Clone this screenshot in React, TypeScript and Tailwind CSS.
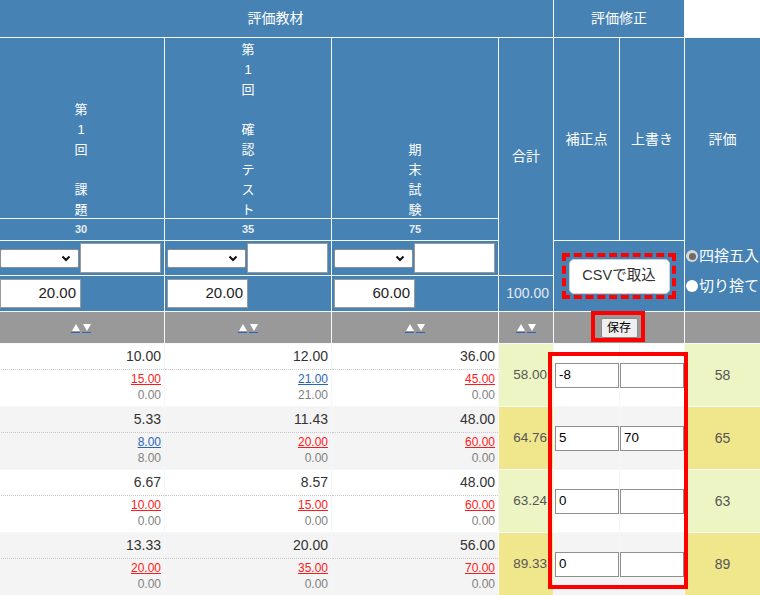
import React from "react";

type Cell = { v: string; l: string; red: boolean; z: string };
type Row = {
  bg: string;
  totBg: string;
  tot: string;
  cells: Cell[];
  p: string;
  o: string;
  g: string;
  rs: string;
};

const rows: Row[] = [
  {
    bg: "bg-white",
    totBg: "bg-[#eef5c4]",
    tot: "58.00",
    cells: [
      { v: "10.00", l: "15.00", red: true, z: "0.00" },
      { v: "12.00", l: "21.00", red: false, z: "21.00" },
      { v: "36.00", l: "45.00", red: true, z: "0.00" },
    ],
    p: "-8",
    o: "",
    g: "58",
    rs: "row-start-7",
  },
  {
    bg: "bg-[#f4f4f4]",
    totBg: "bg-[#f0e68c]",
    tot: "64.76",
    cells: [
      { v: "5.33", l: "8.00", red: false, z: "8.00" },
      { v: "11.43", l: "20.00", red: true, z: "0.00" },
      { v: "48.00", l: "60.00", red: true, z: "0.00" },
    ],
    p: "5",
    o: "70",
    g: "65",
    rs: "row-start-8",
  },
  {
    bg: "bg-white",
    totBg: "bg-[#eef5c4]",
    tot: "63.24",
    cells: [
      { v: "6.67", l: "10.00", red: true, z: "0.00" },
      { v: "8.57", l: "15.00", red: true, z: "0.00" },
      { v: "48.00", l: "60.00", red: true, z: "0.00" },
    ],
    p: "0",
    o: "",
    g: "63",
    rs: "row-start-9",
  },
  {
    bg: "bg-[#f4f4f4]",
    totBg: "bg-[#f0e68c]",
    tot: "89.33",
    cells: [
      { v: "13.33", l: "20.00", red: true, z: "0.00" },
      { v: "20.00", l: "35.00", red: true, z: "0.00" },
      { v: "56.00", l: "70.00", red: true, z: "0.00" },
    ],
    p: "0",
    o: "",
    g: "89",
    rs: "row-start-10",
  },
];

const cols = ["col-start-1", "col-start-2", "col-start-3"];
const heads = [
  ["第", "1", "回", "", "課", "題"],
  ["第", "1", "回", "", "確", "認", "テ", "ス", "ト"],
  ["期", "末", "試", "験"],
];
const weights = ["30", "35", "75"];
const values = ["20.00", "20.00", "60.00"];

function Sort() {
  return (
    <div className="flex items-center gap-[2px]">
      {[0, 1].map((i) => (
        <span key={i} className="flex h-[9px] w-[9px] items-start justify-center border-b border-[#2a66b8]">
          <svg width="8" height="7" viewBox="0 0 8 7">
            {i === 0 ? <polygon points="4,0 8,7 0,7" fill="#fff" /> : <polygon points="0,0 8,0 4,7" fill="#fff" />}
          </svg>
        </span>
      ))}
    </div>
  );
}

function FakeSelect() {
  return (
    <div className="flex h-[19px] w-[79px] items-center justify-end rounded-[2px] border border-[#8d8d8d] bg-white pr-[7px]">
      <svg width="10" height="7" viewBox="0 0 10 7">
        <path d="M1.5 1.5 L5 5 L8.5 1.5" stroke="#111" strokeWidth="2" fill="none" />
      </svg>
    </div>
  );
}

export default function App() {
  return (
    <div className="relative h-[595px] w-[760px] overflow-hidden bg-white font-['Liberation_Sans','Noto_Sans_CJK_JP',sans-serif]">
      <div className="ml-[-2px] grid w-[762px] grid-cols-[166px_166px_166px_54px_65px_64px_75px] grid-rows-[37px_180px_21px_34px_35px_31px_62px_62px_62px_62px] gap-px bg-[#f4f8fb] text-white">
        {/* header row 1 */}
        <div className="col-span-4 col-start-1 row-start-1 flex items-center justify-center bg-[#4682b4] text-[14px]">評価教材</div>
        <div className="col-span-2 col-start-5 row-start-1 flex items-center justify-center bg-[#4682b4] text-[14px]">評価修正</div>
        <div className="col-start-7 row-start-1 bg-white" />

        {/* vertical headers */}
        {heads.map((h, i) => (
          <div key={i} className={`${cols[i]} row-start-2 flex flex-col items-center justify-end bg-[#4682b4] text-[13px]`}>
            {h.map((c, j) => (
              <div key={j} className="h-[20px] leading-[24px]">
                {c}
              </div>
            ))}
          </div>
        ))}
        <div className="col-start-4 row-span-3 row-start-2 flex items-center justify-center bg-[#4682b4] text-[14px]">合計</div>
        <div className="col-start-5 row-span-2 row-start-2 flex items-center justify-center bg-[#4682b4] text-[14px]">補正点</div>
        <div className="col-start-6 row-span-2 row-start-2 flex items-center justify-center bg-[#4682b4] text-[14px]">上書き</div>
        <div className="col-start-7 row-span-4 row-start-2 flex flex-col overflow-hidden bg-[#4682b4]">
          <div className="flex h-[202px] items-center justify-center text-[14px]">評価</div>
          <div className="flex flex-col gap-[10px] pt-[6px] text-[15px]">
            <div className="flex h-[20px] items-center gap-[1px] whitespace-nowrap pl-[1px]">
              <span className="flex h-[12px] w-[12px] shrink-0 items-center justify-center rounded-full bg-[#d6d6d6]">
                <span className="h-[7px] w-[7px] rounded-full bg-[#6b6b6b]" />
              </span>
              四捨五入
            </div>
            <div className="flex h-[20px] items-center gap-[1px] whitespace-nowrap pl-[1px]">
              <span className="h-[12px] w-[12px] shrink-0 rounded-full bg-white" />
              切り捨て
            </div>
          </div>
        </div>

        {/* weights */}
        {weights.map((w, i) => (
          <div key={w} className={`${cols[i]} row-start-3 flex items-center justify-center bg-[#4682b4] text-[11px] font-bold text-[#e6eef6]`}>
            {w}
          </div>
        ))}

        {/* selects */}
        {weights.map((w, i) => (
          <div key={w} className={`${cols[i]} row-start-4 flex items-center gap-px bg-[#4682b4] pl-[2px]`}>
            <FakeSelect />
            <div className="h-[30px] w-[81px] border border-[#9a9a9a] bg-white" />
          </div>
        ))}
        <div className="col-span-2 col-start-5 row-span-2 row-start-4 flex items-center justify-center bg-[#4682b4]">
          <div className="flex h-[35px] w-[101px] items-center justify-center rounded-[5px] border border-[#d0d0d0] bg-white text-[14.5px] text-[#333]">
            CSVで取込
          </div>
        </div>

        {/* values */}
        {values.map((v, i) => (
          <div key={i} className={`${cols[i]} row-start-5 flex items-center bg-[#4682b4] pl-[2px]`}>
            <div className="flex h-[29px] w-[81px] items-center justify-end border border-[#9a9a9a] bg-white pr-[4px] text-[15px] text-[#222]">
              {v}
            </div>
          </div>
        ))}
        <div className="col-start-4 row-start-5 flex items-center justify-end bg-[#4682b4] pr-[4px] text-[14px] text-[#e2eaf2]">100.00</div>

        {/* sort row */}
        {["col-start-1", "col-start-2", "col-start-3", "col-start-4"].map((c) => (
          <div key={c} className={`${c} row-start-6 flex items-center justify-center bg-[#999999] pt-[1px]`}>
            <Sort />
          </div>
        ))}
        <div className="col-span-2 col-start-5 row-start-6 flex items-center justify-center bg-[#999999]">
          <div className="flex h-[20px] w-[37px] items-center justify-center rounded-[2px] border border-[#8a8a8a] bg-[#efefef] text-[12px] text-black">
            保存
          </div>
        </div>
        <div className="col-start-7 row-start-6 bg-[#999999]" />

        {/* data rows */}
        {rows.map((r) => (
          <React.Fragment key={r.rs}>
            {r.cells.map((c, i) => (
              <div key={i} className={`${cols[i]} ${r.rs} flex flex-col ${r.bg}`}>
                <div className="flex h-[26px] items-center justify-end border-b border-dotted border-[#c8c8c8] pr-[3px] text-[14px] text-[#333]">
                  {c.v}
                </div>
                <div className="flex h-[17px] items-center justify-end pr-[3px] text-[12px]">
                  <span className={`underline ${c.red ? "text-[#ff1a1a]" : "text-[#2a66b8]"}`}>{c.l}</span>
                </div>
                <div className="flex h-[16px] items-center justify-end pr-[3px] text-[12px] text-[#7f7f7f]">{c.z}</div>
              </div>
            ))}
            <div className={`col-start-4 ${r.rs} flex items-center justify-end whitespace-nowrap pr-[6px] text-[13.5px] text-[#555] ${r.totBg}`}>
              {r.tot}
            </div>
            <div className={`col-start-5 ${r.rs} flex items-center pl-px ${r.bg}`}>
              <div className="flex h-[25px] w-full items-center border border-[#8f8f8f] bg-white pl-[3px] text-[13.33px] text-black">{r.p}</div>
            </div>
            <div className={`col-start-6 ${r.rs} flex items-center ${r.bg}`}>
              <div className="flex h-[25px] w-full items-center border border-[#8f8f8f] bg-white pl-[3px] text-[13.33px] text-black">{r.o}</div>
            </div>
            <div className={`col-start-7 ${r.rs} flex items-center justify-center text-[14px] text-[#555] ${r.totBg}`}>{r.g}</div>
          </React.Fragment>
        ))}
      </div>

      {/* annotations */}
      <div className="absolute left-[562px] top-[253px] h-[46px] w-[114px] border-[4px] border-dashed border-[#ff0000]" />
      <div className="absolute left-[591px] top-[311px] h-[31px] w-[54px] border-[4px] border-[#ff0000]" />
      <div className="absolute left-[548px] top-[352px] h-[237px] w-[140px] border-[4px] border-[#ff0000]" />
    </div>
  );
}
